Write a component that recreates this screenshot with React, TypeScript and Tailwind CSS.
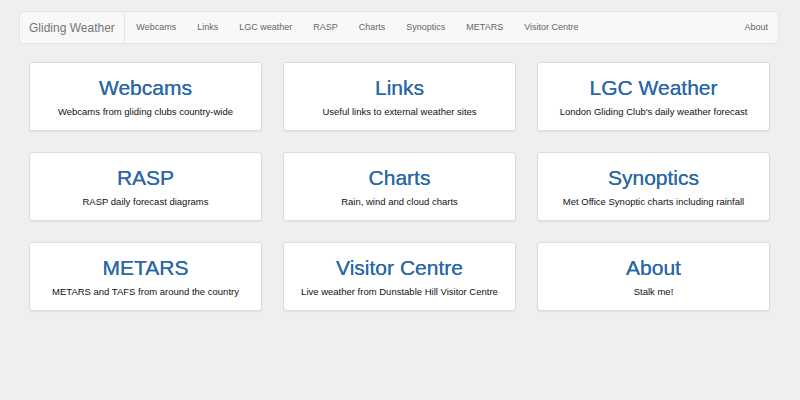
const links = ["Webcams", "Links", "LGC weather", "RASP", "Charts", "Synoptics", "METARS", "Visitor Centre"]

const cards = [
  { title: "Webcams", text: "Webcams from gliding clubs country-wide" },
  { title: "Links", text: "Useful links to external weather sites" },
  { title: "LGC Weather", text: "London Gliding Club's daily weather forecast" },
  { title: "RASP", text: "RASP daily forecast diagrams" },
  { title: "Charts", text: "Rain, wind and cloud charts" },
  { title: "Synoptics", text: "Met Office Synoptic charts including rainfall" },
  { title: "METARS", text: "METARS and TAFS from around the country" },
  { title: "Visitor Centre", text: "Live weather from Dunstable Hill Visitor Centre" },
  { title: "About", text: "Stalk me!" },
]

const App = () => {
  return (
    <div className="w-[800px] h-[400px] bg-[#efefef] overflow-hidden font-['Liberation_Sans',Arial,sans-serif]">
      <div className="pt-[11px] px-[19px] pr-[21px]">
        <nav className="flex items-stretch h-[33px] bg-[#f8f8f8] border border-[#e4e4e4] rounded-[4px]">
          <div className="flex items-center pl-[9px] pr-[9px] border-r border-[#e4e4e4] text-[12px] text-[#777]">
            Gliding Weather
          </div>
          <ul className="flex items-center pl-[1px] text-[9px] text-[#666]">
            {links.map((l) => (
              <li key={l} className="px-[10.5px]">{l}</li>
            ))}
          </ul>
          <div className="ml-auto flex items-center pr-[10px] text-[9px] text-[#666]">About</div>
        </nav>
      </div>
      <div className="pl-[29px] pt-[18px]">
        <div className="grid grid-cols-3 gap-x-[21px] gap-y-[21px] w-[741px]">
          {cards.map((c) => (
            <div
              key={c.title}
              className="h-[69px] bg-white border border-[#dcdcdc] rounded-[3px] shadow-[0_1px_2px_rgba(0,0,0,0.06)] flex flex-col items-center pt-[11px]"
            >
              <h2 className="text-[21px] leading-[28px] text-[#2a68a8] [text-shadow:0_0_0.4px_#2a68a8]">{c.title}</h2>
              <p className="mt-[3px] text-[9.5px] leading-[14px] text-[#111]">{c.text}</p>
            </div>
          ))}
        </div>
      </div>
    </div>
  )
}

export default App
